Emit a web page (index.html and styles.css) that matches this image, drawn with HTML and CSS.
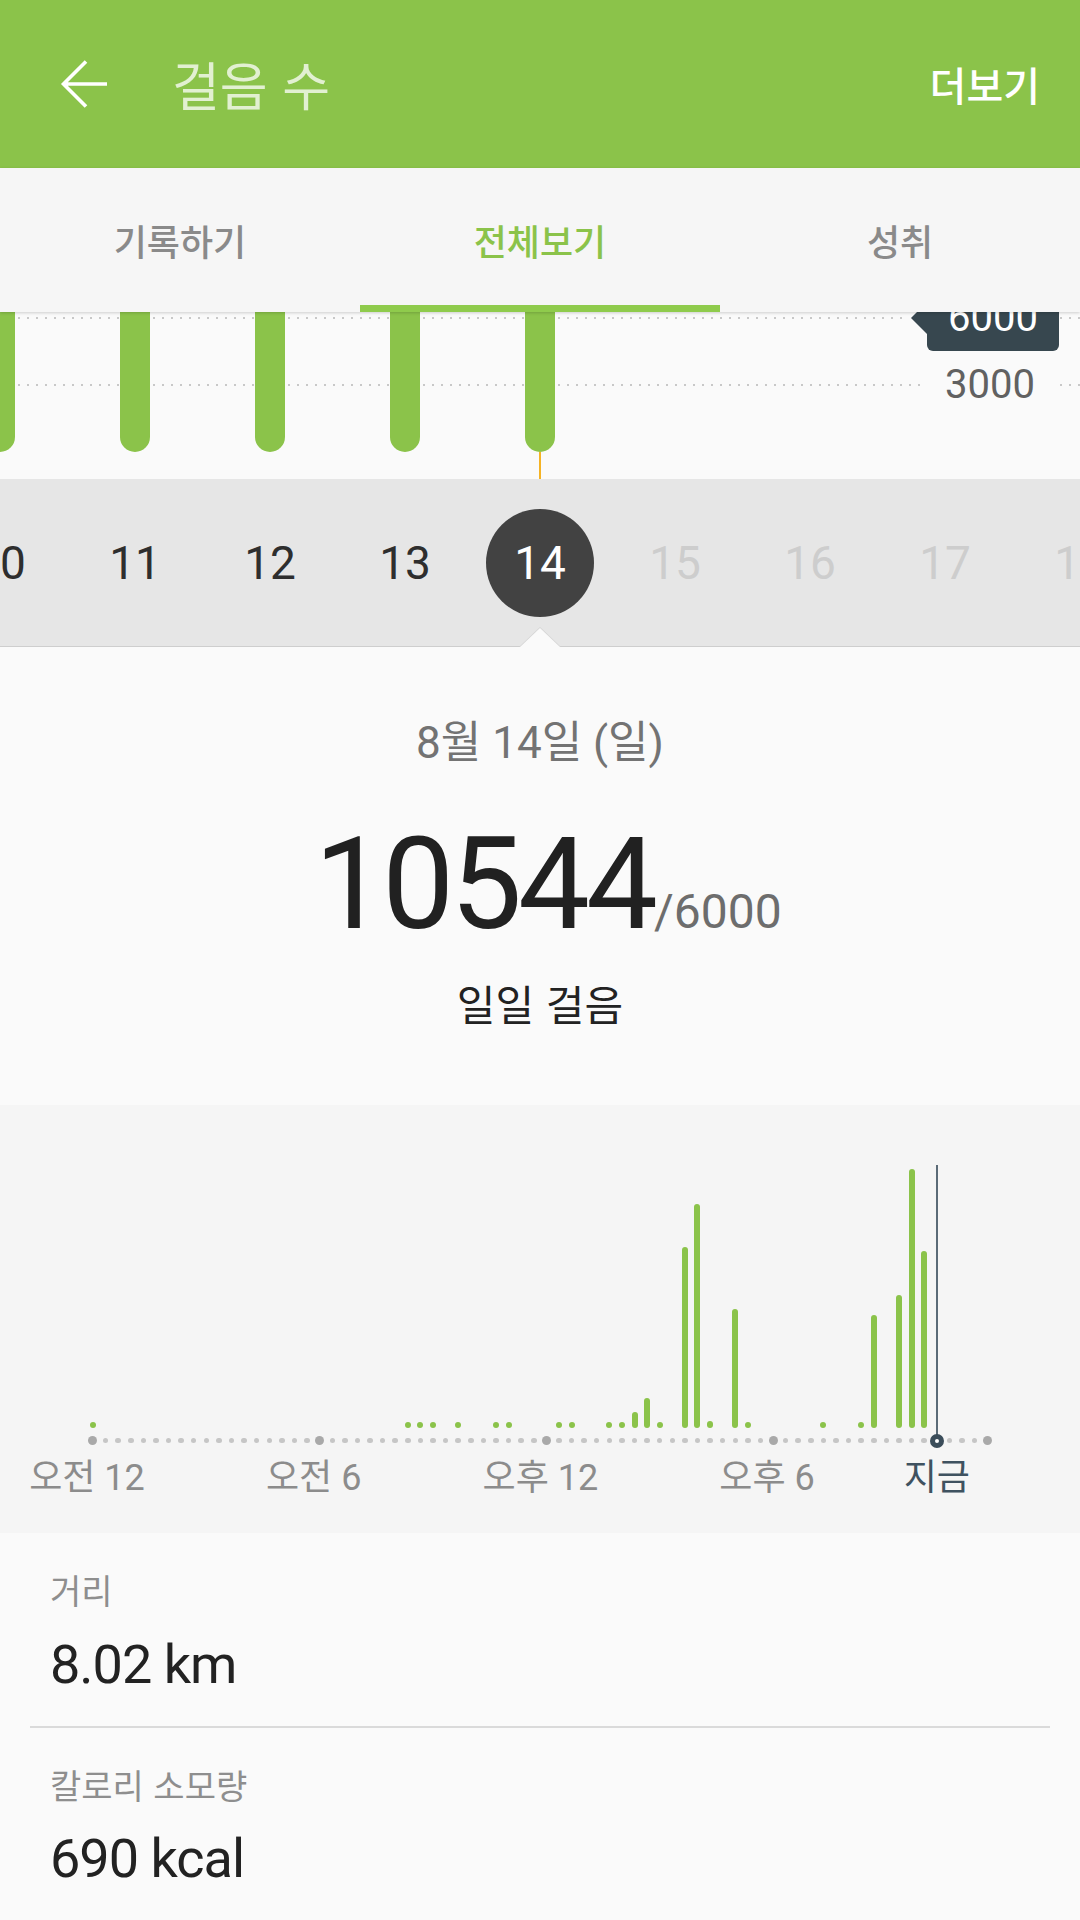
FILE: index.html
```html
<!DOCTYPE html>
<html lang="ko">
<head>
  <meta charset="UTF-8" />
  <title>걸음 수</title>
  <link rel="stylesheet" href="styles.css">
</head>
<body>
  <header class="app-bar">
    <svg class="back-icon" viewBox="0 0 48 48" width="48" height="48">
      <path d="M47 24H4M26 1.5L3.5 24L26 46.5" fill="none" stroke="#fff" stroke-width="3.6" />
    </svg>
    <h1 class="title">걸음 수</h1>
    <span class="more">더보기</span>
  </header>

  <nav class="tabs">
    <div class="tab">기록하기</div>
    <div class="tab active">전체보기</div>
    <div class="tab">성취</div>
  </nav>

  <section class="day-chart">
    <div class="guide guide-goal">
      <span class="dots"></span>
      <span class="goal-tag">6000</span>
      <span class="dots tail"></span>
    </div>
    <div class="guide guide-half">
      <span class="dots"></span>
      <span class="guide-label">3000</span>
      <span class="dots tail"></span>
    </div>
    <div class="day-bars">
      <div class="day-bar"></div>
      <div class="day-bar"></div>
      <div class="day-bar"></div>
      <div class="day-bar"></div>
      <div class="day-bar selected"></div>
    </div>
  </section>

  <div class="date-strip">
    <span class="day">10</span>
    <span class="day">11</span>
    <span class="day">12</span>
    <span class="day">13</span>
    <span class="day selected"><span class="day-circle">14</span></span>
    <span class="day future">15</span>
    <span class="day future">16</span>
    <span class="day future">17</span>
    <span class="day future">18</span>
  </div>

  <section class="summary">
    <p class="summary-date">8월 14일 (일)</p>
    <p class="summary-count">10544<span class="goal">/6000</span></p>
    <p class="summary-label">일일 걸음</p>
  </section>

  <section class="hourly">
    <div class="plot" id="plot"></div>
    <div class="axis" id="axis"></div>
    <div class="axis-labels">
      <span class="tick t0">오전 12</span>
      <span class="tick t6">오전 6</span>
      <span class="tick t12">오후 12</span>
      <span class="tick t18">오후 6</span>
      <span class="tick tnow">지금</span>
    </div>
  </section>

  <section class="stats">
    <div class="stat">
      <p class="stat-label">거리</p>
      <p class="stat-value">8.02 km</p>
    </div>
    <div class="stat">
      <p class="stat-label">칼로리 소모량</p>
      <p class="stat-value">690 kcal</p>
    </div>
  </section>

  <script>
  // 20분 단위 걸음 막대 (px 높이)
  const SLOTS = 72;
  const NOW = 67;
  const steps = {
    0: 6, 25: 6, 26: 6, 27: 6, 29: 6, 32: 6, 33: 6, 37: 6, 38: 6,
    41: 6, 42: 6, 43: 16, 44: 30, 45: 6, 47: 181, 48: 224, 49: 7,
    51: 119, 52: 6, 58: 6, 61: 6, 62: 113, 64: 133, 65: 259, 66: 177
  };

  const plot = document.getElementById("plot");
  const axis = document.getElementById("axis");

  for (let i = 0; i < SLOTS; i++) {
    const slot = document.createElement("div");
    slot.className = "slot";
    if (steps[i]) {
      const bar = document.createElement("div");
      bar.className = "bar";
      bar.style.height = steps[i] + "px";
      slot.appendChild(bar);
    }
    if (i === NOW) {
      const line = document.createElement("div");
      line.className = "now-line";
      slot.appendChild(line);
    }
    plot.appendChild(slot);

    const dot = document.createElement("span");
    let cls = "dot";
    if (i % 18 === 0 || i === SLOTS - 1) cls += " major";
    if (i === NOW) cls += " now";
    dot.className = cls;
    axis.appendChild(dot);
  }
  </script>
</body>
</html>
```

FILE: styles.css
```css
/* Reset and base */
* {
  box-sizing: border-box;
}
body {
  margin: 0;
  width: 1080px;
  height: 1920px;
  overflow: hidden;
  background: #fafafa;
  font-family: Roboto, "Noto Sans CJK KR", sans-serif;
  color: #222;
}
p, h1 {
  margin: 0;
}

/* 상단 바 */
.app-bar {
  height: 168px;
  background: #8bc34a;
  display: flex;
  align-items: center;
  padding: 0 40px 0 60px;
}
.back-icon {
  flex: none;
}
.title {
  margin-left: 64px;
  font-family: "Noto Sans CJK KR", sans-serif;
  font-size: 52px;
  font-weight: 400;
  line-height: 60px;
  color: rgba(255, 255, 255, 0.75);
}
.more {
  margin-left: auto;
  font-family: "Noto Sans CJK KR", sans-serif;
  font-size: 40px;
  font-weight: 500;
  line-height: 48px;
  color: #fff;
}

/* 탭 */
.tabs {
  position: relative;
  z-index: 2;
  height: 144px;
  display: flex;
  background: #f6f6f6;
  box-shadow: 0 1px 3px rgba(0, 0, 0, 0.18);
}
.tab {
  flex: 1;
  display: flex;
  align-items: center;
  justify-content: center;
  font-family: "Noto Sans CJK KR", sans-serif;
  font-size: 36px;
  font-weight: 500;
  line-height: 44px;
  color: #8a8a8a;
  border-bottom: 7px solid transparent;
  padding-top: 7px;
}
.tab.active {
  color: #8bc34a;
  border-bottom-color: #8fcb4c;
}

/* 일별 막대 */
.day-chart {
  position: relative;
  height: 167px;
  overflow: hidden;
  background: #fafafa;
}
.guide {
  position: absolute;
  left: 0;
  right: 0;
  display: flex;
  align-items: center;
}
.guide-goal {
  top: -27px;
  height: 66px;
}
.guide-half {
  top: 48px;
  height: 50px;
}
.dots {
  flex: 1;
  height: 2px;
  background: repeating-linear-gradient(90deg, #c8c8c8 0 2px, transparent 2px 9px);
}
.dots.tail {
  flex: none;
  width: 20px;
}
.goal-tag {
  position: relative;
  flex: none;
  width: 132px;
  height: 66px;
  margin: 0 1px 0 24px;
  border-radius: 6px;
  background: #37474f;
  color: #fff;
  font-size: 40px;
  line-height: 66px;
  text-align: center;
}
.goal-tag::before {
  content: "";
  position: absolute;
  left: -16px;
  top: 17px;
  border-right: 16px solid #37474f;
  border-top: 16px solid transparent;
  border-bottom: 16px solid transparent;
}
.guide-label {
  margin: 0 25px;
  font-size: 40px;
  line-height: 50px;
  color: #616161;
}
.day-bars {
  position: relative;
  z-index: 1;
  display: flex;
  gap: 105px;
  margin-left: -15px;
}
.day-bar {
  position: relative;
  flex: none;
  width: 30px;
  height: 140px;
  border-radius: 0 0 15px 15px;
  background: #8bc34a;
}
.day-bar.selected::after {
  content: "";
  position: absolute;
  top: 100%;
  left: 14px;
  width: 2px;
  height: 27px;
  background: #f5b324;
}

/* 날짜 선택 */
.date-strip {
  position: relative;
  height: 168px;
  display: flex;
  align-items: center;
  margin-left: -67.5px;
  background: #e6e6e6;
  border-bottom: 1px solid #cecece;
}
.day {
  flex: none;
  width: 135px;
  display: flex;
  justify-content: center;
  font-size: 46px;
  line-height: 56px;
  color: #2e2e2e;
}
.day.future {
  color: #cdcdcd;
}
.day-circle {
  width: 108px;
  height: 108px;
  border-radius: 50%;
  background: #424242;
  color: #fff;
  display: flex;
  align-items: center;
  justify-content: center;
}
.date-strip::before,
.date-strip::after {
  content: "";
  position: absolute;
  bottom: -1px;
  left: calc(50% + 33.75px - 21px);
  border-left: 21px solid transparent;
  border-right: 21px solid transparent;
  border-bottom: 20px solid #d4d4d4;
}
.date-strip::after {
  left: calc(50% + 33.75px - 20px);
  border-left-width: 20px;
  border-right-width: 20px;
  border-bottom: 19px solid #fafafa;
}

/* 오늘 요약 */
.summary {
  height: 458px;
  padding-top: 66px;
  display: flex;
  flex-direction: column;
  align-items: center;
  background: #fafafa;
}
.summary-date {
  font-size: 44px;
  line-height: 60px;
  color: #737373;
}
.summary-count {
  margin-top: 46px;
  padding-left: 16px;
  font-size: 128px;
  line-height: 130px;
  letter-spacing: -4px;
  color: #212121;
}
.summary-count .goal {
  font-size: 48px;
  line-height: 1;
  letter-spacing: 0;
  color: #6d6d6d;
}
.summary-label {
  margin-top: 26px;
  font-family: "Noto Sans CJK KR", sans-serif;
  font-size: 42px;
  line-height: 56px;
  color: #222;
}

/* 시간대별 그래프 */
.hourly {
  height: 428px;
  padding-top: 60px;
  background: #f5f5f5;
}
.plot,
.axis,
.axis-labels {
  display: grid;
  grid-template-columns: repeat(72, 12.6px);
  margin-left: 86.7px;
}
.plot {
  height: 263px;
}
.slot {
  display: flex;
  flex-direction: column;
  justify-content: flex-end;
  align-items: center;
}
.bar {
  width: 6px;
  border-radius: 3px;
  background: #8bc34a;
}
.now-line {
  width: 2px;
  height: 273px;
  margin-bottom: -10px;
  background: #5b6b77;
}
.axis {
  height: 9px;
  margin-top: 5.5px;
  align-items: center;
  justify-items: center;
}
.dot {
  width: 5.5px;
  height: 5.5px;
  border-radius: 50%;
  background: #c6c6c6;
}
.dot.major {
  width: 9px;
  height: 9px;
  background: #a9a9a9;
}
.dot.now {
  width: 14px;
  height: 14px;
  border: 5px solid #3b4d5a;
  background: #fff;
}
.axis-labels {
  margin-top: 11.5px;
}
.tick {
  grid-row: 1;
  display: flex;
  justify-content: center;
  white-space: nowrap;
  padding-right: 12px;
  font-size: 36px;
  line-height: 48px;
  color: #8c8c8c;
}
.t0 { grid-column: 1; }
.t6 { grid-column: 19; }
.t12 { grid-column: 37; }
.t18 { grid-column: 55; }
.tnow {
  grid-column: 68;
  padding-right: 0;
  color: #3f5260;
}

/* 거리 / 칼로리 */
.stat {
  margin: 0 30px;
  padding: 34px 20px 29px;
  border-bottom: 2px solid #dadada;
}
.stat-label {
  font-family: "Noto Sans CJK KR", sans-serif;
  font-size: 34px;
  line-height: 46px;
  color: #8e8e8e;
}
.stat-value {
  margin-top: 19.5px;
  font-size: 54px;
  line-height: 64px;
  letter-spacing: -1px;
  color: #222;
}
```
